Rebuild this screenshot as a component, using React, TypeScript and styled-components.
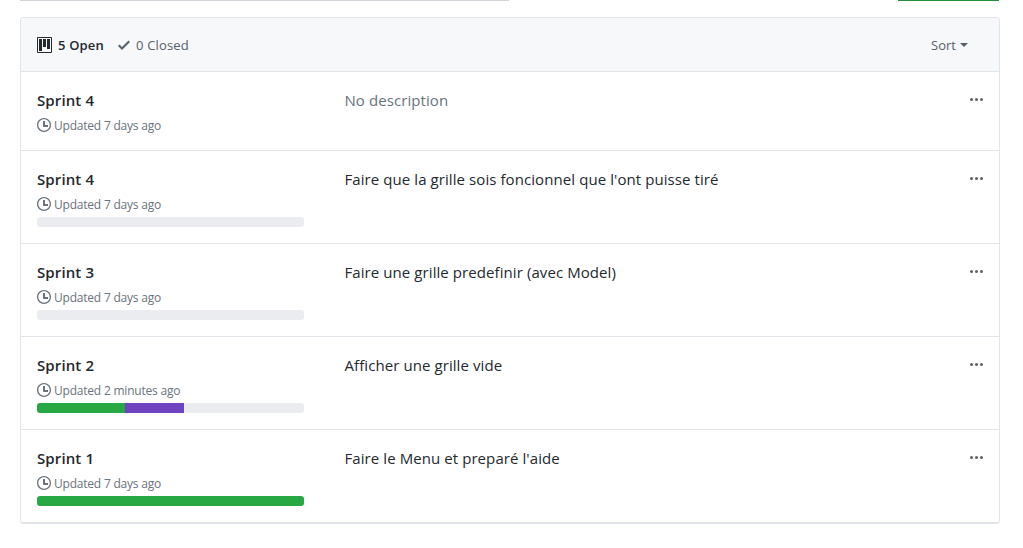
import React from 'react';
import styled, { createGlobalStyle } from 'styled-components';

const GlobalStyle = createGlobalStyle`
  * { box-sizing: border-box; }
  body {
    margin: 0;
    background: #fff;
    color: #24292e;
    font-family: "Segoe UI", "Open Sans", "Noto Sans", sans-serif;
    overflow: hidden;
  }
`;

const Page = styled.main`
  width: 980px;
  margin-left: 20px;
`;

const Toolbar = styled.div`
  display: flex;
  justify-content: space-between;
  height: 17px;
`;

const SearchEdge = styled.div`
  width: 489px;
  height: 1px;
  background: #d1d5da;
`;

const NewButtonEdge = styled.div`
  width: 101px;
  height: 1px;
  margin-right: 1px;
  background: #22903d;
`;

const Box = styled.section`
  border: 1px solid #e1e4e8;
  border-radius: 3px;
`;

const Header = styled.header`
  display: flex;
  align-items: center;
  height: 54px;
  padding: 0 31px 0 16px;
  background: #f6f8fa;
  border-bottom: 1px solid #e1e4e8;
  border-radius: 3px 3px 0 0;
  font-size: 13px;
  line-height: 20px;
`;

const Tab = styled.a<{ $active?: boolean }>`
  display: flex;
  align-items: center;
  gap: 6px;
  margin-right: 14px;
  color: ${p => (p.$active ? '#24292e' : '#586069')};
  font-weight: ${p => (p.$active ? 600 : 400)};
  letter-spacing: 0.18px;
`;

const Sort = styled.button`
  display: flex;
  align-items: center;
  gap: 4px;
  margin-left: auto;
  padding: 0;
  border: 0;
  background: none;
  color: #586069;
  font: inherit;
`;

const Caret = styled.span`
  margin-top: 1px;
  border: 4px solid transparent;
  border-top-color: currentColor;
  border-bottom: 0;
`;

const Row = styled.article<{ $bar: boolean }>`
  display: flex;
  height: ${p => (p.$bar ? 93 : 79)}px;
  padding: 16px 16px 0;
  border-bottom: 1px solid #e1e4e8;
`;

const Summary = styled.div`
  width: 267px;
  margin-right: 40px;
`;

const Title = styled.h4`
  margin: 0;
  font-size: 15px;
  font-weight: 600;
  line-height: 25px;
  letter-spacing: 0.12px;
`;

const Updated = styled.div`
  display: flex;
  align-items: center;
  gap: 3px;
  height: 18px;
  margin-top: 3px;
  color: #6a737d;
  font-size: 12px;
  line-height: 18px;
  letter-spacing: -0.21px;
  white-space: nowrap;

  span {
    padding-top: 2px;
  }
`;

const Progress = styled.div`
  display: flex;
  height: 10px;
  margin-top: 4px;
  overflow: hidden;
  background: #eaecef;
  border-radius: 3px;
`;

const Segment = styled.span<{ $color: string }>`
  background: ${p => p.$color};
`;

const Description = styled.div<{ $muted: boolean }>`
  flex: 1;
  padding-left: 0.5px;
  color: ${p => (p.$muted ? '#6a737d' : '#24292e')};
  font-size: 15px;
  line-height: 25px;
  letter-spacing: 0.08px;
  white-space: nowrap;
`;

const Menu = styled.button`
  display: flex;
  height: 16px;
  margin-top: 4px;
  padding: 0;
  border: 0;
  background: none;
  color: #586069;
`;

const Icon = ({ width, d }: { width: number; d: string }) => (
  <svg width={width} height="16" viewBox={`0 0 ${width} 16`} fill="currentColor" fillRule="evenodd" aria-hidden="true">
    <path d={d} />
  </svg>
);

const PROJECT = 'M10 12h3V2h-3v10zm-4-2h3V2H6v8zm-4 4h3V2H2v12zm-1 1h13V1H1v14zM14 0H1a1 1 0 0 0-1 1v14a1 1 0 0 0 1 1h13a1 1 0 0 0 1-1V1a1 1 0 0 0-1-1z';
const CHECK = 'M12 5l-8 8-4-4 1.5-1.5L4 10l6.5-6.5z';
const CLOCK = 'M8 8h3v2H7c-.55 0-1-.45-1-1V4h2v4zM7 2.3c3.14 0 5.7 2.56 5.7 5.7s-2.56 5.7-5.7 5.7A5.71 5.71 0 0 1 1.3 8c0-3.14 2.56-5.7 5.7-5.7zM7 1C3.14 1 0 4.14 0 8s3.14 7 7 7 7-3.14 7-7-3.14-7-7-7z';
const KEBAB = 'M1.5 9a1.5 1.5 0 1 0 0-3 1.5 1.5 0 0 0 0 3zm5 0a1.5 1.5 0 1 0 0-3 1.5 1.5 0 0 0 0 3zM13 7.5a1.5 1.5 0 1 1-3 0 1.5 1.5 0 0 1 3 0z';

type Project = { title: string; updated: string; description?: string; progress?: { done: number; doing: number } };

const projects: Project[] = [
  { title: 'Sprint 4', updated: '7 days ago' },
  { title: 'Sprint 4', updated: '7 days ago', description: "Faire que la grille sois foncionnel que l'ont puisse tiré", progress: { done: 0, doing: 0 } },
  { title: 'Sprint 3', updated: '7 days ago', description: 'Faire une grille predefinir (avec Model)', progress: { done: 0, doing: 0 } },
  { title: 'Sprint 2', updated: '2 minutes ago', description: 'Afficher une grille vide', progress: { done: 33, doing: 22 } },
  { title: 'Sprint 1', updated: '7 days ago', description: "Faire le Menu et preparé l'aide", progress: { done: 100, doing: 0 } },
];

export default function App() {
  return (
    <>
      <GlobalStyle />
      <Page>
        <Toolbar>
          <SearchEdge />
          <NewButtonEdge />
        </Toolbar>
        <Box>
          <Header>
            <Tab $active><Icon width={15} d={PROJECT} /><span>5 Open</span></Tab>
            <Tab><Icon width={12} d={CHECK} /><span>0 Closed</span></Tab>
            <Sort>Sort<Caret /></Sort>
          </Header>
          {projects.map((p, i) => (
            <Row key={i} $bar={!!p.progress}>
              <Summary>
                <Title>{p.title}</Title>
                <Updated><Icon width={14} d={CLOCK} /><span>Updated {p.updated}</span></Updated>
                {p.progress && (
                  <Progress>
                    <Segment $color="#28a745" style={{ width: `${p.progress.done}%` }} />
                    <Segment $color="#6f42c1" style={{ width: `${p.progress.doing}%` }} />
                  </Progress>
                )}
              </Summary>
              <Description $muted={!p.description}>{p.description ?? 'No description'}</Description>
              <Menu aria-label="Project menu"><Icon width={13} d={KEBAB} /></Menu>
            </Row>
          ))}
        </Box>
      </Page>
    </>
  );
}
